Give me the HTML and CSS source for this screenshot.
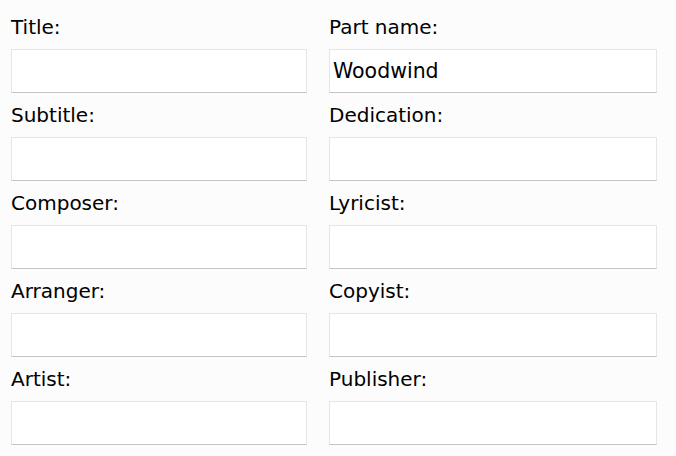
FILE: index.html
```html
<!DOCTYPE html>
<html>
<head>
<meta charset="utf-8">
<link rel="stylesheet" href="styles.css">
</head>
<body>
<div class="form">
  <div class="field"><label class="label">Title:</label><input class="input" type="text" value=""></div>
  <div class="field"><label class="label">Part name:</label><input class="input" type="text" value="Woodwind"></div>
  <div class="field"><label class="label">Subtitle:</label><input class="input" type="text" value=""></div>
  <div class="field"><label class="label">Dedication:</label><input class="input" type="text" value=""></div>
  <div class="field"><label class="label">Composer:</label><input class="input" type="text" value=""></div>
  <div class="field"><label class="label">Lyricist:</label><input class="input" type="text" value=""></div>
  <div class="field"><label class="label">Arranger:</label><input class="input" type="text" value=""></div>
  <div class="field"><label class="label">Copyist:</label><input class="input" type="text" value=""></div>
  <div class="field"><label class="label">Artist:</label><input class="input" type="text" value=""></div>
  <div class="field"><label class="label">Publisher:</label><input class="input" type="text" value=""></div>
</div>
</body>
</html>
```
FILE: styles.css
```css
html, body {
  margin: 0;
  padding: 0;
  background: #fcfcfc;
  font-family: "DejaVu Sans", sans-serif;
  color: #000;
}
.form {
  display: grid;
  grid-template-columns: 296px 328px;
  column-gap: 22px;
  padding: 5px 0 0 11px;
}
.field {
  display: flex;
  flex-direction: column;
}
.label {
  height: 44px;
  line-height: 44px;
  font-size: 20px;
}
.input {
  box-sizing: border-box;
  height: 44px;
  margin: 0;
  padding: 0 3px;
  background: #fff;
  border: 1px solid #e6e6e6;
  border-bottom: 1px solid #c4c4c4;
  border-radius: 0;
  font-family: "DejaVu Sans", sans-serif;
  font-size: 20.5px;
  color: #000;
  outline: none;
}
```
